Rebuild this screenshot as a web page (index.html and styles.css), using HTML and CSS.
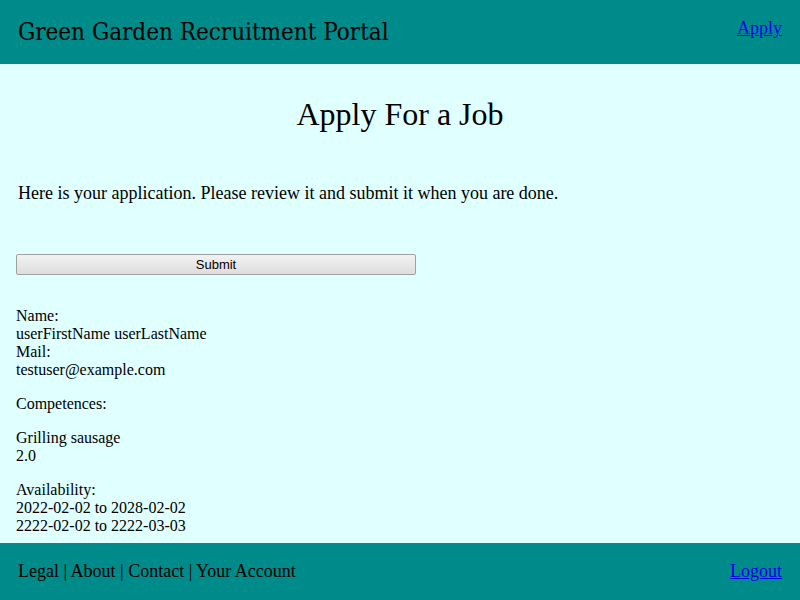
FILE: index.html
```html
<!DOCTYPE html>
<html>
<head>
<meta charset="utf-8">
<link rel="stylesheet" href="styles.css">
</head>
<body>
<header class="top">
  <div class="brand">Green Garden Recruitment Portal</div>
  <a class="headlink" href="#">Apply</a>
</header>
<main class="main">
  <h1 class="title">Apply For a Job</h1>
  <p class="intro">Here is your application. Please review it and submit it when you are done.</p>
  <button class="submit">Submit</button>
  <div class="details">
    <div class="group">Name:<br>userFirstName userLastName<br>Mail:<br>testuser@example.com</div>
    <div class="group">Competences:</div>
    <div class="group">Grilling sausage<br>2.0</div>
    <div class="group">Availability:<br>2022-02-02 to 2028-02-02<br>2222-02-02 to 2222-03-03</div>
  </div>
</main>
<footer class="bottom">
  <div class="links">Legal | About | Contact | Your Account</div>
  <a class="footlink" href="#">Logout</a>
</footer>
</body>
</html>
```
FILE: styles.css
```css
html, body {
  margin: 0;
  padding: 0;
}
body {
  background: #e0ffff;
  font-family: "Liberation Serif", serif;
  color: #000;
  height: 600px;
  display: flex;
  flex-direction: column;
}
.top {
  background: #008b8b;
  height: 64px;
  flex: none;
  display: flex;
  justify-content: space-between;
  align-items: flex-start;
  padding: 0 18px;
  box-sizing: border-box;
}
.brand {
  font-family: "DejaVu Serif", serif;
  font-stretch: condensed;
  font-size: 24px;
  margin-top: 18px;
}
.headlink {
  font-size: 18px;
  color: #0000ee;
  margin-top: 18px;
}
.main {
  flex: 1;
  padding: 0 16px;
  overflow: hidden;
}
.title {
  text-align: center;
  font-weight: normal;
  font-size: 32px;
  margin: 32px 0 0;
}
.intro {
  font-size: 18px;
  margin: 50px 2px 0;
}
.submit {
  display: block;
  width: 400px;
  height: 21px;
  margin-top: 50px;
  font-family: "Liberation Sans", sans-serif;
  font-size: 13px;
  border: 1px solid #a0a0a0;
  border-radius: 2px;
  background: linear-gradient(#f2f2f2, #dddddd);
  padding: 0;
}
.details {
  margin-top: 32px;
  font-size: 16px;
  line-height: 18px;
}
.group {
  margin-bottom: 16px;
}
.bottom {
  background: #008b8b;
  height: 57px;
  flex: none;
  display: flex;
  justify-content: space-between;
  align-items: center;
  padding: 0 18px;
  box-sizing: border-box;
  font-size: 18px;
}
.footlink {
  color: #0000ee;
}
```
